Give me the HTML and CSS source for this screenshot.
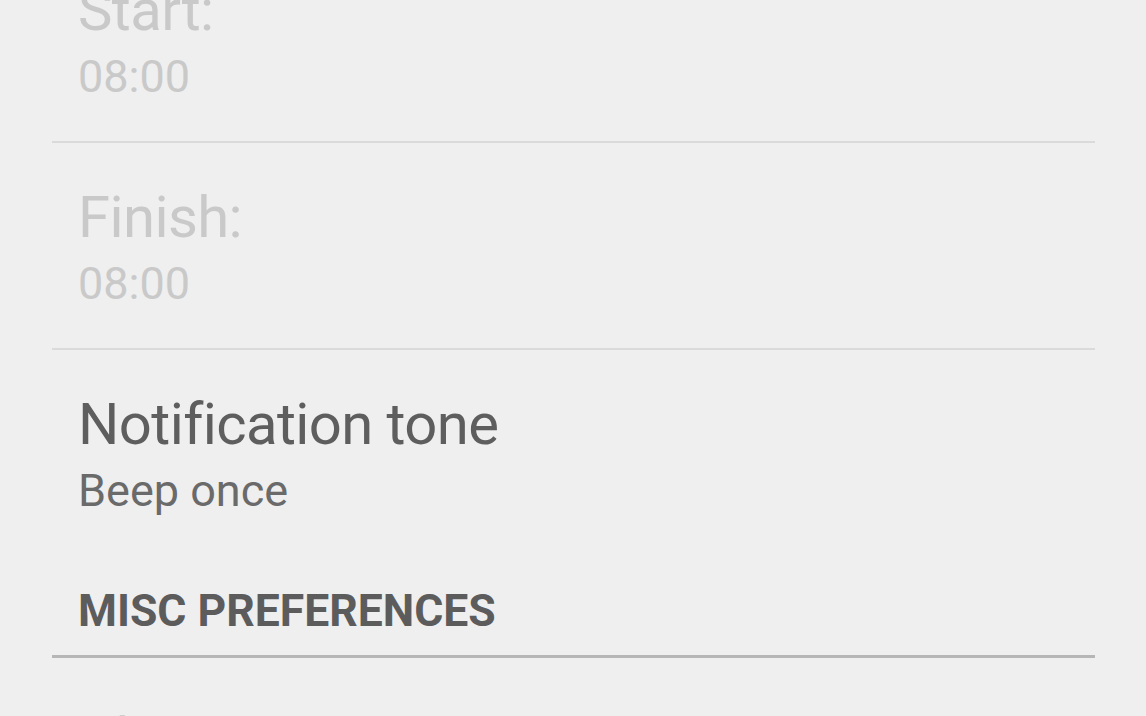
FILE: index.html
```html
<!DOCTYPE html>
<html>
<head>
<meta charset="utf-8">
<link rel="stylesheet" href="styles.css">
</head>
<body>
<div class="list">
  <div class="pref divided disabled">
    <div class="title">Start:</div>
    <div class="summary">08:00</div>
  </div>
  <div class="pref divided disabled">
    <div class="title">Finish:</div>
    <div class="summary">08:00</div>
  </div>
  <div class="pref">
    <div class="title">Notification tone</div>
    <div class="summary">Beep once</div>
  </div>
  <div class="header">MISC PREFERENCES</div>
  <div class="pref last">
    <div class="title">Always Show Timer Text</div>
    <div class="summary">Enabled</div>
  </div>
</div>
</body>
</html>
```
FILE: styles.css
```css
html, body {
  margin: 0;
  padding: 0;
  background: #efefef;
  overflow: hidden;
  height: 716px;
}
body {
  font-family: Roboto, "Noto Sans", sans-serif;
}
.list {
  margin-top: -64px;
}
.pref {
  margin: 0 51px 0 52px;
  padding: 39px 0 32px 26px;
}
.pref.divided {
  border-bottom: 2px solid #dadada;
}
.pref.last {
  padding-top: 46px;
}
.title {
  font-size: 58px;
  line-height: 70px;
  letter-spacing: -0.6px;
  color: #5e5e5e;
  white-space: nowrap;
}
.summary {
  font-size: 45px;
  line-height: 64px;
  color: #6a6a6a;
  white-space: nowrap;
}
.disabled .title,
.disabled .summary {
  color: #c9c9c9;
}
.header {
  margin: 0 51px 0 52px;
  padding: 31px 0 19px 26px;
  border-bottom: 3px solid #b6b6b6;
  font-size: 44.5px;
  line-height: 50px;
  font-weight: bold;
  color: #5c5c5c;
}
```
